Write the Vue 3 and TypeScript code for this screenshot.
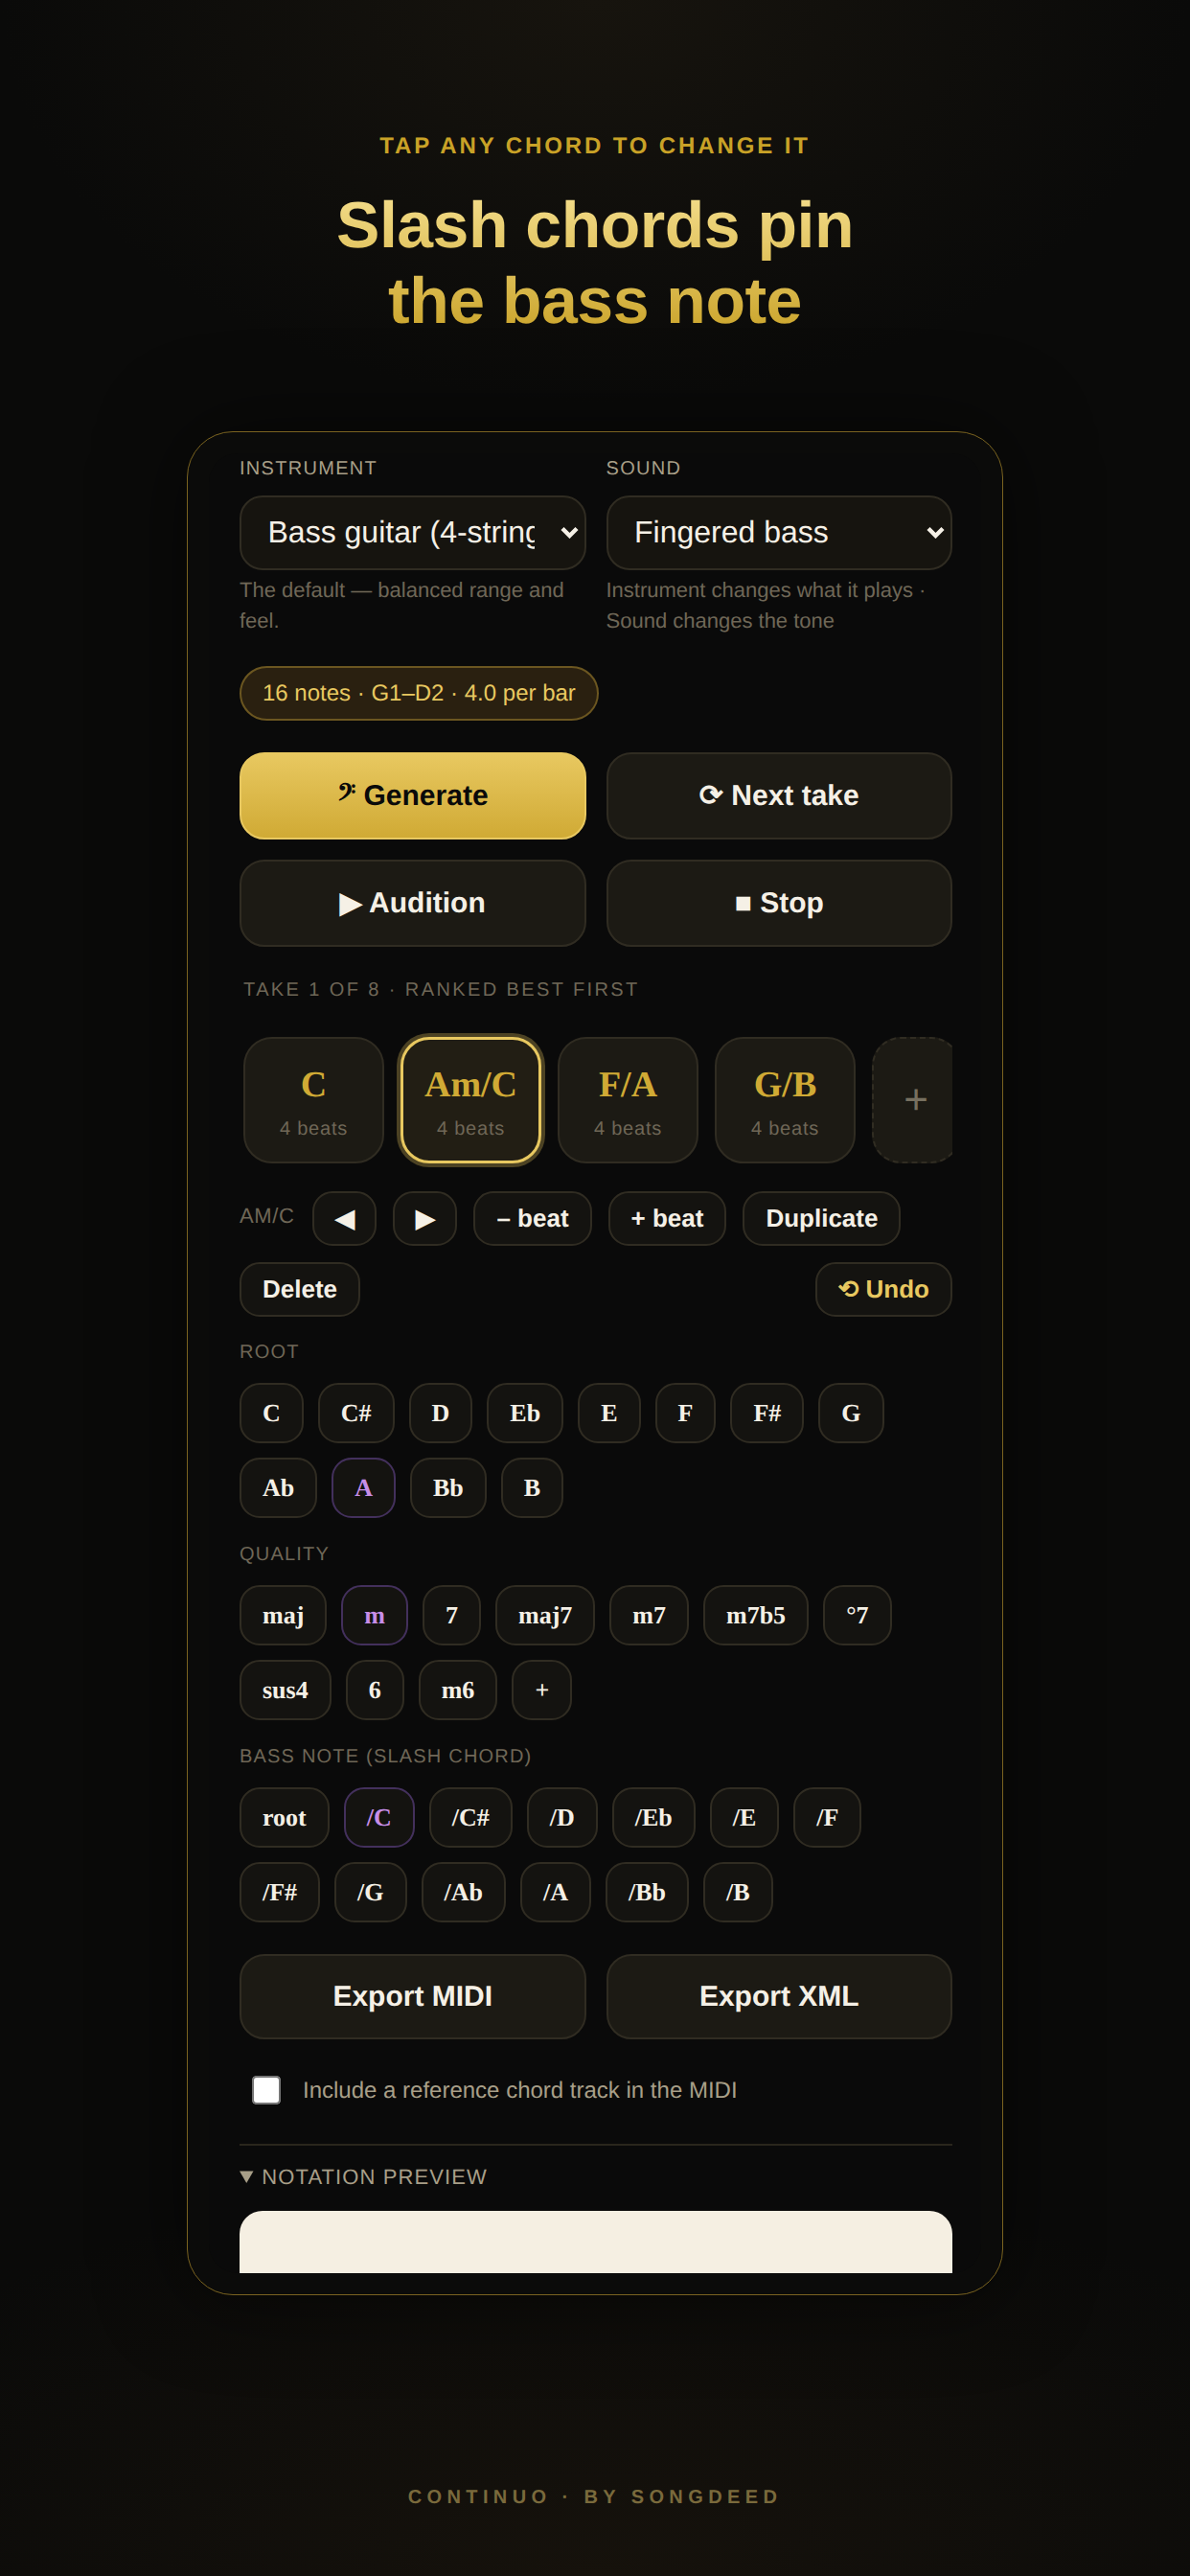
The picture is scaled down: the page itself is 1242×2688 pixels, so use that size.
<script setup lang="ts">
const chords = [
  { name: 'C', on: false },
  { name: 'Am/C', on: true },
  { name: 'F/A', on: false },
  { name: 'G/B', on: false },
]
const roots = ['C', 'C#', 'D', 'Eb', 'E', 'F', 'F#', 'G', 'Ab', 'A', 'Bb', 'B']
const qualities = ['maj', 'm', '7', 'maj7', 'm7', 'm7b5', '°7', 'sus4', '6', 'm6', '+']
const basses = ['root', '/C', '/C#', '/D', '/Eb', '/E', '/F', '/F#', '/G', '/Ab', '/A', '/Bb', '/B']
const groups = [
  { title: 'Root', items: roots, on: 'A' },
  { title: 'Quality', items: qualities, on: 'm' },
  { title: 'Bass note (slash chord)', items: basses, on: '/C' },
]
const instruments = ['Bass guitar (4-string)', 'Bass guitar (5-string)', 'Upright bass']
const sounds = ['Fingered bass', 'Picked bass', 'Slap bass']
</script>

<template>
  <main class="page">
    <p class="eyebrow">TAP ANY CHORD TO CHANGE IT</p>
    <h1 class="title">Slash chords pin<br />the bass note</h1>

    <section class="card">
      <div class="inner">
        <div class="two fields">
          <div class="field">
            <label class="label">INSTRUMENT</label>
            <div class="select-wrap">
              <select class="select">
                <option v-for="o in instruments" :key="o">{{ o }}</option>
              </select>
              <svg class="chev" viewBox="0 0 19 13" aria-hidden="true"><path d="M2 2.5 9.5 10 17 2.5" /></svg>
            </div>
            <p class="hint">The default — balanced range and feel.</p>
          </div>
          <div class="field">
            <label class="label">SOUND</label>
            <div class="select-wrap">
              <select class="select">
                <option v-for="o in sounds" :key="o">{{ o }}</option>
              </select>
              <svg class="chev" viewBox="0 0 19 13" aria-hidden="true"><path d="M2 2.5 9.5 10 17 2.5" /></svg>
            </div>
            <p class="hint">Instrument changes what it plays · Sound changes the tone</p>
          </div>
        </div>

        <div class="pill">16 notes · G1–D2 · 4.0 per bar</div>

        <div class="two actions">
          <button class="big primary">𝄢 Generate</button>
          <button class="big">⟳ Next take</button>
          <button class="big">▶ Audition</button>
          <button class="big">■ Stop</button>
        </div>

        <p class="take">TAKE 1 OF 8 · RANKED BEST FIRST</p>

        <div class="strip">
          <div v-for="c in chords" :key="c.name" class="chord" :class="{ active: c.on }">
            <div class="chord-name">{{ c.name }}</div>
            <div class="chord-meta">4 beats</div>
          </div>
          <div class="chord add">+</div>
        </div>

        <div class="tools">
          <span class="tools-label">AM/C</span>
          <button class="tool arrow">◀</button>
          <button class="tool arrow">▶</button>
          <button class="tool">– beat</button>
          <button class="tool">+ beat</button>
          <button class="tool">Duplicate</button>
          <button class="tool">Delete</button>
          <button class="tool undo">⟲ Undo</button>
        </div>

        <div v-for="g in groups" :key="g.title" class="group">
          <div class="group-title">{{ g.title }}</div>
          <div class="chips">
            <button v-for="i in g.items" :key="i" class="chip" :class="{ sel: i === g.on }">{{ i }}</button>
          </div>
        </div>

        <div class="two exports">
          <button class="big export">Export MIDI</button>
          <button class="big export">Export XML</button>
        </div>

        <label class="check">
          <input type="checkbox" class="box" />
          <span>Include a reference chord track in the MIDI</span>
        </label>

        <details class="notation" open>
          <summary class="summary">NOTATION PREVIEW</summary>
          <div class="sheet"></div>
        </details>
      </div>
    </section>

    <footer class="foot">CONTINUO · BY SONGDEED</footer>
  </main>
</template>

<style>
html,
body {
  margin: 0;
  background: #0a0a0a;
}
</style>

<style scoped>
.page {
  box-sizing: border-box;
  width: 1242px;
  height: 2688px;
  padding-top: 138px;
  display: flex;
  flex-direction: column;
  align-items: center;
  overflow: hidden;
  font-family: "Liberation Sans", Arial, sans-serif;
  text-rendering: geometricPrecision;
  color: #f5f0e6;
  background:
    radial-gradient(ellipse 620px 420px at 50% 0, #17140e 0, rgba(23, 20, 14, 0) 100%),
    radial-gradient(ellipse 900px 420px at 50% 100%, #16120c 0, rgba(22, 18, 12, 0) 100%),
    #0a0a09;
}
.page button,
.page select {
  text-rendering: geometricPrecision;
}
.eyebrow {
  margin: 0;
  font-size: 24px;
  line-height: 30px;
  font-weight: 700;
  letter-spacing: 2.88px;
  color: #c9a227;
}
.title {
  margin: 28px 0 0;
  font-size: 68px;
  line-height: 79px;
  font-weight: 700;
  letter-spacing: -0.5px;
  text-align: center;
  background: linear-gradient(180deg, #f5df8e 0%, #c9a227 100%);
  -webkit-background-clip: text;
  background-clip: text;
  color: transparent;
}
.card {
  box-sizing: border-box;
  width: 852px;
  height: 1945px;
  margin-top: 96px;
  padding: 22px;
  border: 1px solid #7a6320;
  border-radius: 48px;
  background: #0b0b0a;
  box-shadow: 0 0 90px rgba(0, 0, 0, 0.55);
  flex-shrink: 0;
}
.inner {
  box-sizing: border-box;
  height: 100%;
  padding: 4px 30px 0 32px;
  overflow: hidden;
  border-radius: 30px;
  background: #0a0a0a;
}
.two {
  display: grid;
  grid-template-columns: 1fr 1fr;
  column-gap: 21px;
}
.field {
  display: flex;
  flex-direction: column;
  min-width: 0;
}
.label {
  font-size: 20px;
  line-height: 24px;
  letter-spacing: 1.3px;
  color: #a89f88;
}
.select-wrap {
  position: relative;
  margin-top: 16px;
}
.select {
  appearance: none;
  -webkit-appearance: none;
  display: block;
  box-sizing: border-box;
  width: 100%;
  height: 78px;
  padding: 0 52px 3px 27.5px;
  border: 2px solid #302c22;
  border-radius: 24px;
  background: #16140f;
  color: #f5f0e6;
  font-family: inherit;
  font-size: 32px;
}
.chev {
  position: absolute;
  top: 32px;
  right: 8px;
  width: 19px;
  height: 13px;
  pointer-events: none;
  fill: none;
  stroke: #f5f0e6;
  stroke-width: 4.4;
}
.hint {
  margin: 5px 0 0;
  font-size: 22px;
  line-height: 32px;
  color: #6f6757;
}
.pill {
  box-sizing: border-box;
  width: fit-content;
  height: 57px;
  margin-top: 31px;
  padding: 0 22px;
  display: flex;
  align-items: center;
  border: 2px solid #6b5620;
  border-radius: 29px;
  background: #2a2010;
  color: #e8c860;
  font-size: 24px;
}
.actions {
  margin-top: 33px;
  row-gap: 21px;
}
.big {
  box-sizing: border-box;
  height: 91px;
  border: 2px solid #302c22;
  border-radius: 26px;
  background: #1c1a14;
  color: #f5f0e6;
  font-family: inherit;
  font-size: 30px;
  font-weight: 700;
}
.primary {
  border-color: #e8c860;
  background: linear-gradient(180deg, #e8c860 0%, #d0aa35 100%);
  color: #0a0a0a;
}
.take {
  margin: 33px 0 0;
  padding-left: 4px;
  font-size: 20px;
  line-height: 24px;
  letter-spacing: 2.4px;
  color: #6f6757;
}
.strip {
  display: flex;
  gap: 17px;
  margin-top: 31px;
  padding: 6px 0 6px 4px;
  overflow: hidden;
}
.chord {
  box-sizing: border-box;
  flex: 0 0 147px;
  height: 132px;
  padding-top: 26px;
  border: 2px solid #302c22;
  border-radius: 30px;
  background: #1c1a14;
  text-align: center;
}
.chord.active {
  border: 3px solid #e8c860;
  padding-top: 25px;
  background: #221e14;
  box-shadow: 0 0 0 4px rgba(232, 200, 96, 0.3);
}
.chord-name {
  font-family: "Liberation Serif", "Times New Roman", serif;
  font-size: 38px;
  line-height: 44px;
  font-weight: 700;
  color: #d0aa35;
}
.chord-meta {
  margin-top: 12px;
  font-size: 20px;
  line-height: 24px;
  letter-spacing: 0.8px;
  color: #6f6757;
}
.add {
  flex-basis: 92px;
  padding: 0;
  display: flex;
  align-items: center;
  justify-content: center;
  border-style: dashed;
  font-size: 44px;
  color: #777060;
}
.tools {
  display: flex;
  flex-wrap: wrap;
  align-items: center;
  gap: 17px;
  margin-top: 23px;
}
.tools-label {
  min-width: 59.4px;
  font-size: 22px;
  line-height: 24px;
  letter-spacing: 0.66px;
  color: #6f6757;
  margin-top: -6px;
}
.tool {
  box-sizing: border-box;
  height: 57px;
  padding: 0 22px;
  border: 2px solid #302c22;
  border-radius: 21px;
  background: #141310;
  color: #f5f0e6;
  font-family: inherit;
  font-size: 26px;
  font-weight: 700;
}
.arrow {
  width: 67px;
  padding: 0;
}
.undo {
  margin-left: auto;
  color: #e8c860;
}
.group {
  margin-top: 26px;
}
.tools + .group {
  margin-top: 25px;
}
.group-title {
  font-size: 20px;
  line-height: 24px;
  letter-spacing: 1.2px;
  text-transform: uppercase;
  color: #6f6757;
}
.chips {
  display: flex;
  flex-wrap: wrap;
  gap: 15px;
  margin-top: 20px;
}
.chip {
  box-sizing: border-box;
  height: 63px;
  padding: 0 22px;
  border: 2px solid #302c22;
  border-radius: 21px;
  background: #141310;
  color: #f5f0e6;
  font-family: "Liberation Serif", "Times New Roman", serif;
  font-size: 26px;
  font-weight: 700;
}
.chip.sel {
  border-color: #43305c;
  color: #c78ee8;
}
.exports {
  margin-top: 33px;
}
.export {
  height: 89px;
}
.check {
  display: flex;
  align-items: center;
  gap: 23px;
  margin-top: 38px;
  padding-left: 13px;
  font-size: 24px;
  color: #a89f88;
}
.box {
  zoom: 2;
  width: 15px;
  height: 15.5px;
  margin: 0;
}
.notation {
  margin-top: 40px;
  padding-top: 20px;
  border-top: 2px solid #2a261c;
}
.summary {
  font-size: 22px;
  line-height: 26px;
  letter-spacing: 1.1px;
  color: #a89f88;
}
.sheet {
  height: 200px;
  margin-top: 22px;
  border-radius: 24px;
  background: #f5efe2;
}
.foot {
  margin-top: 199px;
  font-size: 20px;
  line-height: 24px;
  font-weight: 700;
  letter-spacing: 5.4px;
  color: #7a6a3c;
}
</style>
